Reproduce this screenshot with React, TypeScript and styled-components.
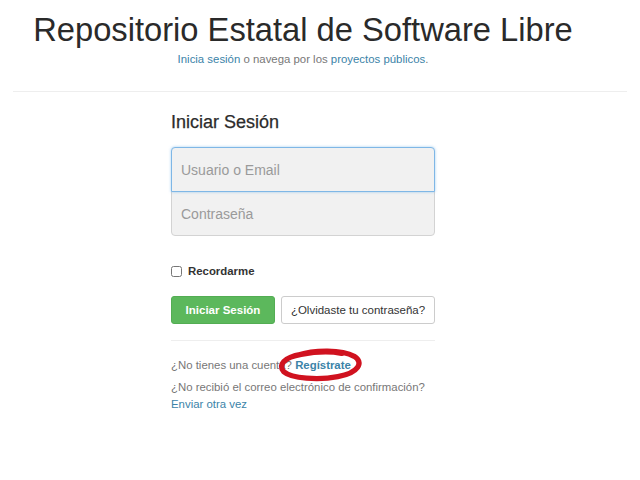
import React, { useState } from "react";
import styled, { createGlobalStyle } from "styled-components";

const GlobalStyle = createGlobalStyle`
  body {
    margin: 0;
    background: #ffffff;
    font-family: "Liberation Sans", Arial, sans-serif;
    color: #333333;
  }
`;

const Page = styled.div`
  width: 640px;
`;

const Centered = styled.div`
  width: 606px;
  display: flex;
  flex-direction: column;
  align-items: center;
`;

const Header = styled(Centered)`
  padding-top: 12px;
`;

const Title = styled.h1`
  margin: 0;
  font-size: 32.7px;
  font-weight: 400;
  line-height: 36px;
  color: #2a2a2a;
`;

const Lead = styled.p`
  margin: 4px 0 0;
  font-size: 11.4px;
  line-height: 14px;
  color: #777777;
`;

const Link = styled.a<{ $bold?: boolean }>`
  color: #3b83a8;
  text-decoration: none;
  font-weight: ${(p) => (p.$bold ? 700 : 400)};
`;

const Divider = styled.hr<{ $inset?: boolean }>`
  border: 0;
  border-top: 1px solid #eeeeee;
  margin: ${(p) => (p.$inset ? "16px 0 0" : "25px 13px 0")};
`;

const FormColumn = styled.div`
  width: 264px;
  padding-top: 19px;
`;

const FormTitle = styled.h2`
  margin: 0 0 14px;
  font-size: 18px;
  font-weight: 400;
  line-height: 22px;
  color: #2b2b2b;
  -webkit-text-stroke: 0.25px #2b2b2b;
`;

const InputGroup = styled.div`
  display: flex;
  flex-direction: column;
`;

const Field = styled.input<{ $position: "top" | "bottom"; $focused?: boolean }>`
  box-sizing: border-box;
  width: 100%;
  height: 45px;
  padding: 0 9px;
  font-family: inherit;
  font-size: 14px;
  color: #555555;
  background: #f1f1f1;
  border: 1px solid ${(p) => (p.$focused ? "#7fb7e6" : "#d3d3d3")};
  border-radius: ${(p) => (p.$position === "top" ? "4px 4px 0 0" : "0 0 4px 4px")};
  margin-top: ${(p) => (p.$position === "bottom" ? "-1px" : "0")};
  box-shadow: ${(p) => (p.$focused ? "0 0 3px rgba(102, 175, 233, 0.6)" : "none")};
  outline: none;
  position: relative;
  z-index: ${(p) => (p.$focused ? 1 : 0)};

  &::placeholder {
    color: #9a9a9a;
  }
`;

const CheckRow = styled.label`
  display: flex;
  align-items: center;
  gap: 6px;
  margin-top: 29px;
  font-size: 11.4px;
  font-weight: 700;
  color: #333333;
`;

const Check = styled.input`
  margin: 0;
  width: 11px;
  height: 11px;
`;

const Buttons = styled.div`
  display: flex;
  gap: 6px;
  margin-top: 19px;
`;

const Button = styled.button<{ $primary?: boolean }>`
  width: ${(p) => (p.$primary ? "104px" : "154px")};
  height: 28px;
  padding: 0;
  white-space: nowrap;
  font-family: inherit;
  font-size: 11.5px;
  font-weight: ${(p) => (p.$primary ? 700 : 400)};
  color: ${(p) => (p.$primary ? "#ffffff" : "#333333")};
  background: ${(p) => (p.$primary ? "#5cb85c" : "#ffffff")};
  border: 1px solid ${(p) => (p.$primary ? "#53ad53" : "#cccccc")};
  border-radius: 3px;
  cursor: pointer;
`;

const Footer = styled.div`
  padding-top: 16px;
  font-size: 11.4px;
  line-height: 17px;
  color: #777777;
`;

const FooterLine = styled.div<{ $gap?: number }>`
  margin-top: ${(p) => p.$gap ?? 0}px;
`;

const Marked = styled.span`
  position: relative;
`;

const Scribble = styled.svg`
  position: absolute;
  left: -17px;
  top: -11px;
  width: 83px;
  height: 33px;
  pointer-events: none;
  overflow: visible;
`;

const App = () => {
  const [remember, setRemember] = useState(false);

  return (
    <Page>
      <GlobalStyle />
      <Header>
        <Title>Repositorio Estatal de Software Libre</Title>
        <Lead>
          <Link href="#">Inicia sesión</Link> o navega por los{" "}
          <Link href="#">proyectos públicos</Link>.
        </Lead>
      </Header>
      <Divider />
      <Centered>
        <FormColumn>
          <FormTitle>Iniciar Sesión</FormTitle>
          <InputGroup>
            <Field $position="top" $focused placeholder="Usuario o Email" />
            <Field $position="bottom" type="password" placeholder="Contraseña" />
          </InputGroup>
          <CheckRow>
            <Check
              type="checkbox"
              checked={remember}
              onChange={(e) => setRemember(e.target.checked)}
            />
            Recordarme
          </CheckRow>
          <Buttons>
            <Button $primary>Iniciar Sesión</Button>
            <Button>¿Olvidaste tu contraseña?</Button>
          </Buttons>
          <Divider $inset />
          <Footer>
            <FooterLine>
              ¿No tienes una cuenta?{" "}
              <Marked>
                <Link href="#" $bold>
                  Regístrate
                </Link>
                <Scribble viewBox="0 0 86 33">
                  <path
                    d="M20 7 C 38 1, 66 1, 79 8 C 89 14, 84 25, 62 29 C 42 33, 14 31, 6 24 C 0 17, 6 9, 24 6 C 40 3, 56 3, 66 5"
                    fill="none"
                    stroke="#d0121f"
                    strokeWidth="5.5"
                    strokeLinecap="round"
                  />
                </Scribble>
              </Marked>
            </FooterLine>
            <FooterLine $gap={5}>¿No recibió el correo electrónico de confirmación?</FooterLine>
            <FooterLine>
              <Link href="#">Enviar otra vez</Link>
            </FooterLine>
          </Footer>
        </FormColumn>
      </Centered>
    </Page>
  );
};

export default App;
